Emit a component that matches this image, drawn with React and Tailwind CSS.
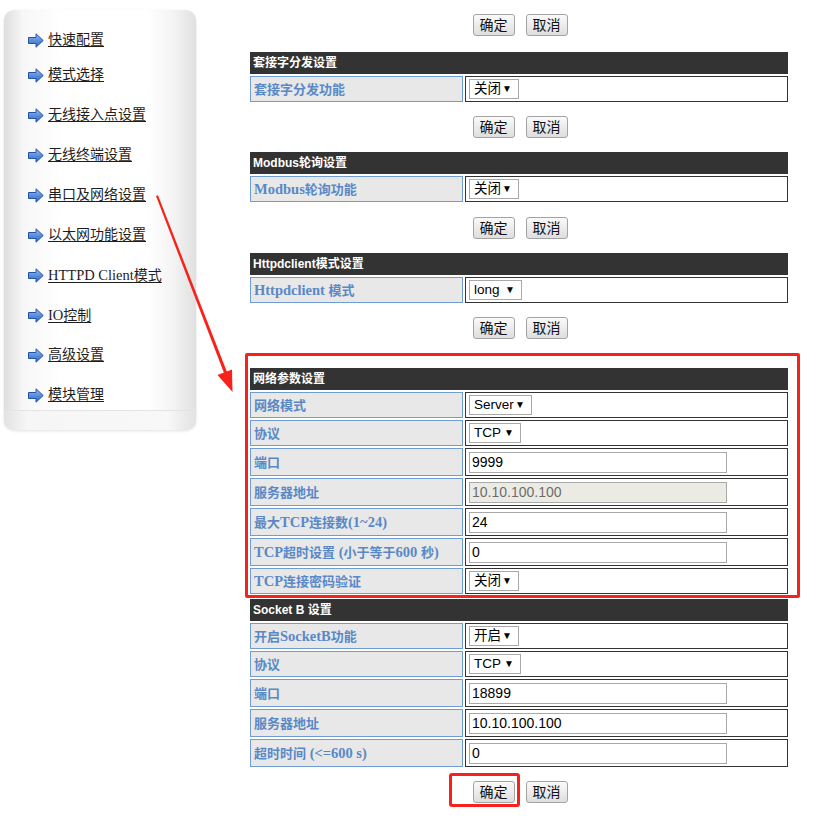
const menu = [
  '快速配置',
  '模式选择',
  '无线接入点设置',
  '无线终端设置',
  '串口及网络设置',
  '以太网功能设置',
  'HTTPD Client模式',
  'IO控制',
  '高级设置',
  '模块管理',
]

const cjk = "font-['Liberation_Sans','Noto_Sans_CJK_SC',sans-serif]"

// latin runs are drawn a touch larger than the CJK glyphs, as in the original page
function Mixed({ text, latin }) {
  return text.split(/([\x20-\x7e]+)/).map((part, i) =>
    /[\x21-\x7e]/.test(part) ? (
      <span key={i} className={latin}>
        {part}
      </span>
    ) : (
      part
    )
  )
}

function MenuArrow() {
  return (
    <svg width="16" height="15" viewBox="0 0 16 15" className="shrink-0">
      <defs>
        <linearGradient id="ma" x1="0" y1="0" x2="0" y2="1">
          <stop offset="0" stopColor="#9dbdf0" />
          <stop offset="0.5" stopColor="#5b8fdc" />
          <stop offset="1" stopColor="#3166c0" />
        </linearGradient>
      </defs>
      <polygon
        points="0.5,4.5 8,4.5 8,0.8 15.2,7.5 8,14.2 8,10.5 0.5,10.5"
        fill="url(#ma)"
        stroke="#2552a6"
        strokeWidth="1"
        strokeLinejoin="round"
      />
    </svg>
  )
}

function Sidebar() {
  return (
    <div className="relative ml-[4px] mt-[10px] w-[192px] h-[420px] rounded-[10px] shadow-[0_1px_3px_rgba(0,0,0,0.12)] bg-[linear-gradient(to_right,#dedede,#f7f7f7_10%,#ffffff_30%,#ffffff_75%,#f4f4f4_88%,#e0e0e0)] flex flex-col pt-[15px]">
      {menu.map((m, i) => (
        <div
          key={m}
          className={`shrink-0 flex items-center pl-[24px] ${i === 0 ? 'h-[30px]' : 'h-[40px]'}`}
        >
          <MenuArrow />
          <a className="ml-[4px] text-[14px] leading-none text-[#1e1e1e] underline underline-offset-2 font-['Liberation_Serif','Noto_Sans_CJK_SC',serif]">
            <Mixed text={m} latin="text-[14.5px]" />
          </a>
        </div>
      ))}
      <div className="absolute left-0 right-0 bottom-0 h-[20px] rounded-b-[10px] border-t border-[#e4e4e4] bg-[linear-gradient(to_right,#e2e2e2,#f6f6f6_12%,#f8f8f8_85%,#e2e2e2)]" />
    </div>
  )
}

function Btn({ children }) {
  return (
    <button
      className={`block w-[42px] h-[22px] rounded-[3px] border border-[#a3a3a3] bg-[linear-gradient(#fafafa,#dedede)] text-[14px] leading-none text-[#111] ${cjk}`}
    >
      {children}
    </button>
  )
}

function Buttons({ className = '', mark = false }) {
  return (
    <div className={`flex justify-center gap-[11px] pl-[2px] h-[22px] ${className}`}>
      <div className="relative flex">
        <Btn>确定</Btn>
        {mark && (
          <div className="absolute -left-[24px] -right-[5px] -top-[8px] -bottom-[4px] border-[3px] border-[#f5231b] rounded-[3px] pointer-events-none" />
        )}
      </div>
      <Btn>取消</Btn>
    </div>
  )
}

function Select({ value, w }) {
  return (
    <div
      className={`flex items-center justify-between h-[20px] border border-[#a9a9a9] bg-white pl-[4px] pr-[6px] ${cjk}`}
      style={{ width: w }}
    >
      <span className="text-[13.5px] leading-none text-black">{value}</span>
      <span className="text-[10px] leading-none text-black">▼</span>
    </div>
  )
}

function Input({ value, disabled }) {
  return (
    <div
      className={`flex items-center w-[258px] h-[21px] border border-[#a9a9a9] px-[2px] text-[14px] leading-none font-['Liberation_Sans',sans-serif] ${
        disabled ? 'bg-[#ebebe4] text-[#6d6d6d]' : 'bg-white text-black'
      }`}
    >
      {value}
    </div>
  )
}

function Section({ title, rows, className = '' }) {
  return (
    <table className={`w-[542px] border-separate border-spacing-[2px] leading-none ${className}`}>
      <tbody>
        <tr>
          <td
            colSpan={2}
            className={`h-[22px] bg-[#333333] px-[3px] text-[12px] leading-none font-bold text-white align-middle ${cjk}`}
          >
            {title}
          </td>
        </tr>
        {rows.map((r) => (
          <tr key={r.label}>
            <td
              className={`w-[213px] border border-[#6e9cd3] bg-[#e8e8e8] px-[3px] text-[13px] leading-none font-bold text-[#5a88c6] align-middle font-['Liberation_Serif','Noto_Sans_CJK_SC',serif] ${
                r.input !== undefined ? 'h-[28px]' : 'h-[26px]'
              }`}
            >
              <Mixed text={r.label} latin="text-[14.5px]" />
            </td>
            <td className="border border-[#333] bg-white pl-[3px] align-middle leading-none">
              {r.input !== undefined ? (
                <Input value={r.input} disabled={r.disabled} />
              ) : (
                <Select value={r.select} w={r.w} />
              )}
            </td>
          </tr>
        ))}
      </tbody>
    </table>
  )
}

export default function App() {
  return (
    <div className="relative w-[828px] min-h-[832px] bg-white flex items-start">
      <Sidebar />

      <div className="ml-[52px] w-[542px]">
        <Buttons className="mt-[14px]" />
        <Section
          className="mt-[14px]"
          title="套接字分发设置"
          rows={[{ label: '套接字分发功能', select: '关闭', w: 50 }]}
        />
        <Buttons className="mt-[12px]" />
        <Section
          className="mt-[12px]"
          title="Modbus轮询设置"
          rows={[{ label: 'Modbus轮询功能', select: '关闭', w: 50 }]}
        />
        <Buttons className="mt-[13px]" />
        <Section
          className="mt-[12px]"
          title="Httpdclient模式设置"
          rows={[{ label: 'Httpdclient 模式', select: 'long', w: 53 }]}
        />
        <Buttons className="mt-[12px]" />

        <div className="relative mt-[27px]">
          <Section
            title="网络参数设置"
            rows={[
              { label: '网络模式', select: 'Server', w: 63 },
              { label: '协议', select: 'TCP', w: 52 },
              { label: '端口', input: '9999' },
              { label: '服务器地址', input: '10.10.100.100', disabled: true },
              { label: '最大TCP连接数(1~24)', input: '24' },
              { label: 'TCP超时设置 (小于等于600 秒)', input: '0' },
              { label: 'TCP连接密码验证', select: '关闭', w: 50 },
            ]}
          />
          <div className="absolute -left-[3px] -right-[10px] -top-[13px] -bottom-[2px] border-[3px] border-[#f5231b] rounded-[2px] pointer-events-none" />
        </div>

        <Section
          className="mt-[1px]"
          title="Socket B 设置"
          rows={[
            { label: '开启SocketB功能', select: '开启', w: 50 },
            { label: '协议', select: 'TCP', w: 52 },
            { label: '端口', input: '18899' },
            { label: '服务器地址', input: '10.10.100.100' },
            { label: '超时时间 (<=600 s)', input: '0' },
          ]}
        />
        <Buttons className="mt-[12px]" mark />
      </div>

      <svg
        className="absolute left-0 top-0 pointer-events-none"
        width="828"
        height="832"
        viewBox="0 0 828 832"
      >
        <polygon points="156,196 158,195.3 227,372 224,373" fill="#f5231b" />
        <polygon points="232.5,392 217.5,375 232,369.5" fill="#f5231b" />
      </svg>
    </div>
  )
}
